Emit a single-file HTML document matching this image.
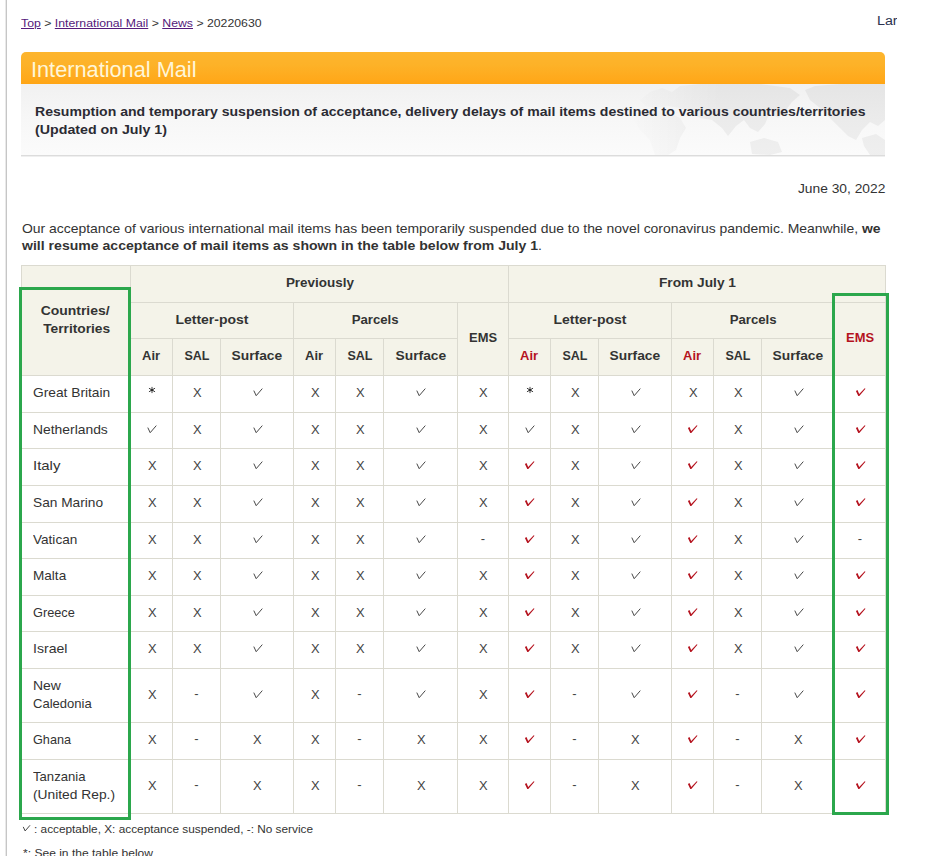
<!DOCTYPE html>
<html><head><meta charset="utf-8"><title>International Mail</title>
<style>
html,body{margin:0;padding:0;background:#fff}
body{width:929px;height:856px;position:relative;overflow:hidden;font-family:"Liberation Sans", sans-serif;}
b{font-weight:700}
</style></head><body>
<div style="position:absolute;left:5px;top:0px;width:1px;height:856px;background:#e9e9e9;"></div>
<div style="position:absolute;left:6px;top:0px;width:1px;height:856px;background:#c6c6c6;"></div>
<div style="position:absolute;left:21px;top:52px;width:864px;height:32px;border-radius:5px 5px 0 0;background:linear-gradient(#fdb52e,#fdb228 40%,#ffa91b 85%,#ffa514);"></div>
<div style="position:absolute;left:21px;top:84px;width:864px;height:71px;background:linear-gradient(#f1f1f1,#f7f7f7 50%,#fbfbfb);"></div>
<svg style="position:absolute;left:21px;top:84px" width="864" height="71" viewBox="21 84 864 71">
<defs><linearGradient id="mg" gradientUnits="userSpaceOnUse" x1="625" y1="0" x2="720" y2="0"><stop offset="0" stop-color="#000" stop-opacity="0"/><stop offset="1" stop-color="#000" stop-opacity="0.05"/></linearGradient></defs>
<g fill="url(#mg)">
<path d="M640 100L650 92L662 88L672 92L680 86L700 84L730 84L760 84L790 88L800 95L792 102L786 110L778 118L770 112L765 124L758 132L750 128L744 120L736 126L728 136L722 128L712 120L700 118L690 112L680 108L668 106L655 108L645 106Z"/>
<path d="M638 111L655 110L668 112L680 118L686 128L680 138L676 150L668 155L655 155L650 140L640 130L634 120Z"/>
<path d="M750 142L764 138L778 142L782 152L770 155L752 154Z"/>
<path d="M805 90L815 86L840 84L885 84L885 120L878 126L870 122L862 130L856 140L848 136L840 128L830 118L820 108L810 100Z"/>
<path d="M862 138L876 134L885 140L885 155L870 155L864 146Z"/>
</g></svg>
<div style="position:absolute;left:21px;top:155px;width:864px;height:1px;background:#dcdcdc;"></div>
<div style="position:absolute;left:21px;top:156px;width:864px;height:1px;background:#efefef;"></div>
<div style="position:absolute;left:870px;top:10px;width:26.5px;height:24px;overflow:hidden"><span style="position:absolute;left:6.5px;top:2.7px;font-size:12.3px;line-height:16px;color:#2b3350;white-space:pre;transform:scaleX(1.16);transform-origin:0 0">Large</span></div>
<div style="position:absolute;left:21px;top:265px;width:865px;height:111px;background:#f4f3e9;"></div>
<div style="position:absolute;left:21px;top:265px;width:865px;height:1px;background:#dbdad0;"></div>
<div style="position:absolute;left:21px;top:813px;width:865px;height:1px;background:#dbdad0;"></div>
<div style="position:absolute;left:21px;top:265px;width:1px;height:549px;background:#dbdad0;"></div>
<div style="position:absolute;left:885px;top:265px;width:1px;height:549px;background:#dbdad0;"></div>
<div style="position:absolute;left:130px;top:302px;width:755px;height:1px;background:#dbdad0;"></div>
<div style="position:absolute;left:130px;top:338px;width:327px;height:1px;background:#dbdad0;"></div>
<div style="position:absolute;left:508px;top:338px;width:326px;height:1px;background:#dbdad0;"></div>
<div style="position:absolute;left:21px;top:375px;width:864px;height:1px;background:#dbdad0;"></div>
<div style="position:absolute;left:21px;top:412px;width:864px;height:1px;background:#dbdad0;"></div>
<div style="position:absolute;left:21px;top:448px;width:864px;height:1px;background:#dbdad0;"></div>
<div style="position:absolute;left:21px;top:485px;width:864px;height:1px;background:#dbdad0;"></div>
<div style="position:absolute;left:21px;top:522px;width:864px;height:1px;background:#dbdad0;"></div>
<div style="position:absolute;left:21px;top:558px;width:864px;height:1px;background:#dbdad0;"></div>
<div style="position:absolute;left:21px;top:595px;width:864px;height:1px;background:#dbdad0;"></div>
<div style="position:absolute;left:21px;top:631px;width:864px;height:1px;background:#dbdad0;"></div>
<div style="position:absolute;left:21px;top:668px;width:864px;height:1px;background:#dbdad0;"></div>
<div style="position:absolute;left:21px;top:722px;width:864px;height:1px;background:#dbdad0;"></div>
<div style="position:absolute;left:21px;top:759px;width:864px;height:1px;background:#dbdad0;"></div>
<div style="position:absolute;left:130px;top:265px;width:1px;height:548px;background:#dbdad0;"></div>
<div style="position:absolute;left:508px;top:265px;width:1px;height:548px;background:#dbdad0;"></div>
<div style="position:absolute;left:293px;top:302px;width:1px;height:511px;background:#dbdad0;"></div>
<div style="position:absolute;left:457px;top:302px;width:1px;height:511px;background:#dbdad0;"></div>
<div style="position:absolute;left:671px;top:302px;width:1px;height:511px;background:#dbdad0;"></div>
<div style="position:absolute;left:834px;top:302px;width:1px;height:511px;background:#dbdad0;"></div>
<div style="position:absolute;left:172px;top:338px;width:1px;height:475px;background:#dbdad0;"></div>
<div style="position:absolute;left:220px;top:338px;width:1px;height:475px;background:#dbdad0;"></div>
<div style="position:absolute;left:335px;top:338px;width:1px;height:475px;background:#dbdad0;"></div>
<div style="position:absolute;left:383px;top:338px;width:1px;height:475px;background:#dbdad0;"></div>
<div style="position:absolute;left:550px;top:338px;width:1px;height:475px;background:#dbdad0;"></div>
<div style="position:absolute;left:598px;top:338px;width:1px;height:475px;background:#dbdad0;"></div>
<div style="position:absolute;left:713px;top:338px;width:1px;height:475px;background:#dbdad0;"></div>
<div style="position:absolute;left:761px;top:338px;width:1px;height:475px;background:#dbdad0;"></div>
<svg style="position:absolute;left:146.50px;top:384.80px" width="10" height="10" viewBox="-5 -5 10 10"><g stroke="#333" stroke-width="0.95" stroke-linecap="round"><path d="M0 -2.7V2.7M-2.7 -1.6L2.7 1.6M-2.7 1.6L2.7 -1.6"/></g><ellipse cx="0" cy="0" rx="1.5" ry="0.85" fill="#222"/></svg>
<svg style="position:absolute;left:250.50px;top:386.80px" width="14.0" height="12.0" viewBox="0 0 14 12"><path d="M2.8 3.6 L5.2 8.7 L11.3 1.6" fill="none" stroke="#484848" stroke-width="1.00" stroke-linejoin="miter"/></svg>
<svg style="position:absolute;left:414.00px;top:386.80px" width="14.0" height="12.0" viewBox="0 0 14 12"><path d="M2.8 3.6 L5.2 8.7 L11.3 1.6" fill="none" stroke="#484848" stroke-width="1.00" stroke-linejoin="miter"/></svg>
<svg style="position:absolute;left:524.50px;top:384.80px" width="10" height="10" viewBox="-5 -5 10 10"><g stroke="#333" stroke-width="0.95" stroke-linecap="round"><path d="M0 -2.7V2.7M-2.7 -1.6L2.7 1.6M-2.7 1.6L2.7 -1.6"/></g><ellipse cx="0" cy="0" rx="1.5" ry="0.85" fill="#222"/></svg>
<svg style="position:absolute;left:628.50px;top:386.80px" width="14.0" height="12.0" viewBox="0 0 14 12"><path d="M2.8 3.6 L5.2 8.7 L11.3 1.6" fill="none" stroke="#484848" stroke-width="1.00" stroke-linejoin="miter"/></svg>
<svg style="position:absolute;left:791.50px;top:386.80px" width="14.0" height="12.0" viewBox="0 0 14 12"><path d="M2.8 3.6 L5.2 8.7 L11.3 1.6" fill="none" stroke="#484848" stroke-width="1.00" stroke-linejoin="miter"/></svg>
<svg style="position:absolute;left:853.50px;top:386.80px" width="14" height="12" viewBox="0 0 14 12"><path d="M1.9 3.9 L3.5 3.0 L5.2 6.9 L10.7 1.2 L11.5 1.8 L5.3 9.1 L4.3 9.1 Z" fill="#b5121e"/></svg>
<svg style="position:absolute;left:145.00px;top:423.80px" width="14.0" height="12.0" viewBox="0 0 14 12"><path d="M2.8 3.6 L5.2 8.7 L11.3 1.6" fill="none" stroke="#484848" stroke-width="1.00" stroke-linejoin="miter"/></svg>
<svg style="position:absolute;left:250.50px;top:423.80px" width="14.0" height="12.0" viewBox="0 0 14 12"><path d="M2.8 3.6 L5.2 8.7 L11.3 1.6" fill="none" stroke="#484848" stroke-width="1.00" stroke-linejoin="miter"/></svg>
<svg style="position:absolute;left:414.00px;top:423.80px" width="14.0" height="12.0" viewBox="0 0 14 12"><path d="M2.8 3.6 L5.2 8.7 L11.3 1.6" fill="none" stroke="#484848" stroke-width="1.00" stroke-linejoin="miter"/></svg>
<svg style="position:absolute;left:523.00px;top:423.80px" width="14.0" height="12.0" viewBox="0 0 14 12"><path d="M2.8 3.6 L5.2 8.7 L11.3 1.6" fill="none" stroke="#484848" stroke-width="1.00" stroke-linejoin="miter"/></svg>
<svg style="position:absolute;left:628.50px;top:423.80px" width="14.0" height="12.0" viewBox="0 0 14 12"><path d="M2.8 3.6 L5.2 8.7 L11.3 1.6" fill="none" stroke="#484848" stroke-width="1.00" stroke-linejoin="miter"/></svg>
<svg style="position:absolute;left:686.00px;top:423.80px" width="14" height="12" viewBox="0 0 14 12"><path d="M1.9 3.9 L3.5 3.0 L5.2 6.9 L10.7 1.2 L11.5 1.8 L5.3 9.1 L4.3 9.1 Z" fill="#b5121e"/></svg>
<svg style="position:absolute;left:791.50px;top:423.80px" width="14.0" height="12.0" viewBox="0 0 14 12"><path d="M2.8 3.6 L5.2 8.7 L11.3 1.6" fill="none" stroke="#484848" stroke-width="1.00" stroke-linejoin="miter"/></svg>
<svg style="position:absolute;left:853.50px;top:423.80px" width="14" height="12" viewBox="0 0 14 12"><path d="M1.9 3.9 L3.5 3.0 L5.2 6.9 L10.7 1.2 L11.5 1.8 L5.3 9.1 L4.3 9.1 Z" fill="#b5121e"/></svg>
<svg style="position:absolute;left:250.50px;top:459.80px" width="14.0" height="12.0" viewBox="0 0 14 12"><path d="M2.8 3.6 L5.2 8.7 L11.3 1.6" fill="none" stroke="#484848" stroke-width="1.00" stroke-linejoin="miter"/></svg>
<svg style="position:absolute;left:414.00px;top:459.80px" width="14.0" height="12.0" viewBox="0 0 14 12"><path d="M2.8 3.6 L5.2 8.7 L11.3 1.6" fill="none" stroke="#484848" stroke-width="1.00" stroke-linejoin="miter"/></svg>
<svg style="position:absolute;left:523.00px;top:459.80px" width="14" height="12" viewBox="0 0 14 12"><path d="M1.9 3.9 L3.5 3.0 L5.2 6.9 L10.7 1.2 L11.5 1.8 L5.3 9.1 L4.3 9.1 Z" fill="#b5121e"/></svg>
<svg style="position:absolute;left:628.50px;top:459.80px" width="14.0" height="12.0" viewBox="0 0 14 12"><path d="M2.8 3.6 L5.2 8.7 L11.3 1.6" fill="none" stroke="#484848" stroke-width="1.00" stroke-linejoin="miter"/></svg>
<svg style="position:absolute;left:686.00px;top:459.80px" width="14" height="12" viewBox="0 0 14 12"><path d="M1.9 3.9 L3.5 3.0 L5.2 6.9 L10.7 1.2 L11.5 1.8 L5.3 9.1 L4.3 9.1 Z" fill="#b5121e"/></svg>
<svg style="position:absolute;left:791.50px;top:459.80px" width="14.0" height="12.0" viewBox="0 0 14 12"><path d="M2.8 3.6 L5.2 8.7 L11.3 1.6" fill="none" stroke="#484848" stroke-width="1.00" stroke-linejoin="miter"/></svg>
<svg style="position:absolute;left:853.50px;top:459.80px" width="14" height="12" viewBox="0 0 14 12"><path d="M1.9 3.9 L3.5 3.0 L5.2 6.9 L10.7 1.2 L11.5 1.8 L5.3 9.1 L4.3 9.1 Z" fill="#b5121e"/></svg>
<svg style="position:absolute;left:250.50px;top:496.80px" width="14.0" height="12.0" viewBox="0 0 14 12"><path d="M2.8 3.6 L5.2 8.7 L11.3 1.6" fill="none" stroke="#484848" stroke-width="1.00" stroke-linejoin="miter"/></svg>
<svg style="position:absolute;left:414.00px;top:496.80px" width="14.0" height="12.0" viewBox="0 0 14 12"><path d="M2.8 3.6 L5.2 8.7 L11.3 1.6" fill="none" stroke="#484848" stroke-width="1.00" stroke-linejoin="miter"/></svg>
<svg style="position:absolute;left:523.00px;top:496.80px" width="14" height="12" viewBox="0 0 14 12"><path d="M1.9 3.9 L3.5 3.0 L5.2 6.9 L10.7 1.2 L11.5 1.8 L5.3 9.1 L4.3 9.1 Z" fill="#b5121e"/></svg>
<svg style="position:absolute;left:628.50px;top:496.80px" width="14.0" height="12.0" viewBox="0 0 14 12"><path d="M2.8 3.6 L5.2 8.7 L11.3 1.6" fill="none" stroke="#484848" stroke-width="1.00" stroke-linejoin="miter"/></svg>
<svg style="position:absolute;left:686.00px;top:496.80px" width="14" height="12" viewBox="0 0 14 12"><path d="M1.9 3.9 L3.5 3.0 L5.2 6.9 L10.7 1.2 L11.5 1.8 L5.3 9.1 L4.3 9.1 Z" fill="#b5121e"/></svg>
<svg style="position:absolute;left:791.50px;top:496.80px" width="14.0" height="12.0" viewBox="0 0 14 12"><path d="M2.8 3.6 L5.2 8.7 L11.3 1.6" fill="none" stroke="#484848" stroke-width="1.00" stroke-linejoin="miter"/></svg>
<svg style="position:absolute;left:853.50px;top:496.80px" width="14" height="12" viewBox="0 0 14 12"><path d="M1.9 3.9 L3.5 3.0 L5.2 6.9 L10.7 1.2 L11.5 1.8 L5.3 9.1 L4.3 9.1 Z" fill="#b5121e"/></svg>
<svg style="position:absolute;left:250.50px;top:533.80px" width="14.0" height="12.0" viewBox="0 0 14 12"><path d="M2.8 3.6 L5.2 8.7 L11.3 1.6" fill="none" stroke="#484848" stroke-width="1.00" stroke-linejoin="miter"/></svg>
<svg style="position:absolute;left:414.00px;top:533.80px" width="14.0" height="12.0" viewBox="0 0 14 12"><path d="M2.8 3.6 L5.2 8.7 L11.3 1.6" fill="none" stroke="#484848" stroke-width="1.00" stroke-linejoin="miter"/></svg>
<svg style="position:absolute;left:523.00px;top:533.80px" width="14" height="12" viewBox="0 0 14 12"><path d="M1.9 3.9 L3.5 3.0 L5.2 6.9 L10.7 1.2 L11.5 1.8 L5.3 9.1 L4.3 9.1 Z" fill="#b5121e"/></svg>
<svg style="position:absolute;left:628.50px;top:533.80px" width="14.0" height="12.0" viewBox="0 0 14 12"><path d="M2.8 3.6 L5.2 8.7 L11.3 1.6" fill="none" stroke="#484848" stroke-width="1.00" stroke-linejoin="miter"/></svg>
<svg style="position:absolute;left:686.00px;top:533.80px" width="14" height="12" viewBox="0 0 14 12"><path d="M1.9 3.9 L3.5 3.0 L5.2 6.9 L10.7 1.2 L11.5 1.8 L5.3 9.1 L4.3 9.1 Z" fill="#b5121e"/></svg>
<svg style="position:absolute;left:791.50px;top:533.80px" width="14.0" height="12.0" viewBox="0 0 14 12"><path d="M2.8 3.6 L5.2 8.7 L11.3 1.6" fill="none" stroke="#484848" stroke-width="1.00" stroke-linejoin="miter"/></svg>
<svg style="position:absolute;left:250.50px;top:569.80px" width="14.0" height="12.0" viewBox="0 0 14 12"><path d="M2.8 3.6 L5.2 8.7 L11.3 1.6" fill="none" stroke="#484848" stroke-width="1.00" stroke-linejoin="miter"/></svg>
<svg style="position:absolute;left:414.00px;top:569.80px" width="14.0" height="12.0" viewBox="0 0 14 12"><path d="M2.8 3.6 L5.2 8.7 L11.3 1.6" fill="none" stroke="#484848" stroke-width="1.00" stroke-linejoin="miter"/></svg>
<svg style="position:absolute;left:523.00px;top:569.80px" width="14" height="12" viewBox="0 0 14 12"><path d="M1.9 3.9 L3.5 3.0 L5.2 6.9 L10.7 1.2 L11.5 1.8 L5.3 9.1 L4.3 9.1 Z" fill="#b5121e"/></svg>
<svg style="position:absolute;left:628.50px;top:569.80px" width="14.0" height="12.0" viewBox="0 0 14 12"><path d="M2.8 3.6 L5.2 8.7 L11.3 1.6" fill="none" stroke="#484848" stroke-width="1.00" stroke-linejoin="miter"/></svg>
<svg style="position:absolute;left:686.00px;top:569.80px" width="14" height="12" viewBox="0 0 14 12"><path d="M1.9 3.9 L3.5 3.0 L5.2 6.9 L10.7 1.2 L11.5 1.8 L5.3 9.1 L4.3 9.1 Z" fill="#b5121e"/></svg>
<svg style="position:absolute;left:791.50px;top:569.80px" width="14.0" height="12.0" viewBox="0 0 14 12"><path d="M2.8 3.6 L5.2 8.7 L11.3 1.6" fill="none" stroke="#484848" stroke-width="1.00" stroke-linejoin="miter"/></svg>
<svg style="position:absolute;left:853.50px;top:569.80px" width="14" height="12" viewBox="0 0 14 12"><path d="M1.9 3.9 L3.5 3.0 L5.2 6.9 L10.7 1.2 L11.5 1.8 L5.3 9.1 L4.3 9.1 Z" fill="#b5121e"/></svg>
<svg style="position:absolute;left:250.50px;top:606.80px" width="14.0" height="12.0" viewBox="0 0 14 12"><path d="M2.8 3.6 L5.2 8.7 L11.3 1.6" fill="none" stroke="#484848" stroke-width="1.00" stroke-linejoin="miter"/></svg>
<svg style="position:absolute;left:414.00px;top:606.80px" width="14.0" height="12.0" viewBox="0 0 14 12"><path d="M2.8 3.6 L5.2 8.7 L11.3 1.6" fill="none" stroke="#484848" stroke-width="1.00" stroke-linejoin="miter"/></svg>
<svg style="position:absolute;left:523.00px;top:606.80px" width="14" height="12" viewBox="0 0 14 12"><path d="M1.9 3.9 L3.5 3.0 L5.2 6.9 L10.7 1.2 L11.5 1.8 L5.3 9.1 L4.3 9.1 Z" fill="#b5121e"/></svg>
<svg style="position:absolute;left:628.50px;top:606.80px" width="14.0" height="12.0" viewBox="0 0 14 12"><path d="M2.8 3.6 L5.2 8.7 L11.3 1.6" fill="none" stroke="#484848" stroke-width="1.00" stroke-linejoin="miter"/></svg>
<svg style="position:absolute;left:686.00px;top:606.80px" width="14" height="12" viewBox="0 0 14 12"><path d="M1.9 3.9 L3.5 3.0 L5.2 6.9 L10.7 1.2 L11.5 1.8 L5.3 9.1 L4.3 9.1 Z" fill="#b5121e"/></svg>
<svg style="position:absolute;left:791.50px;top:606.80px" width="14.0" height="12.0" viewBox="0 0 14 12"><path d="M2.8 3.6 L5.2 8.7 L11.3 1.6" fill="none" stroke="#484848" stroke-width="1.00" stroke-linejoin="miter"/></svg>
<svg style="position:absolute;left:853.50px;top:606.80px" width="14" height="12" viewBox="0 0 14 12"><path d="M1.9 3.9 L3.5 3.0 L5.2 6.9 L10.7 1.2 L11.5 1.8 L5.3 9.1 L4.3 9.1 Z" fill="#b5121e"/></svg>
<svg style="position:absolute;left:250.50px;top:642.80px" width="14.0" height="12.0" viewBox="0 0 14 12"><path d="M2.8 3.6 L5.2 8.7 L11.3 1.6" fill="none" stroke="#484848" stroke-width="1.00" stroke-linejoin="miter"/></svg>
<svg style="position:absolute;left:414.00px;top:642.80px" width="14.0" height="12.0" viewBox="0 0 14 12"><path d="M2.8 3.6 L5.2 8.7 L11.3 1.6" fill="none" stroke="#484848" stroke-width="1.00" stroke-linejoin="miter"/></svg>
<svg style="position:absolute;left:523.00px;top:642.80px" width="14" height="12" viewBox="0 0 14 12"><path d="M1.9 3.9 L3.5 3.0 L5.2 6.9 L10.7 1.2 L11.5 1.8 L5.3 9.1 L4.3 9.1 Z" fill="#b5121e"/></svg>
<svg style="position:absolute;left:628.50px;top:642.80px" width="14.0" height="12.0" viewBox="0 0 14 12"><path d="M2.8 3.6 L5.2 8.7 L11.3 1.6" fill="none" stroke="#484848" stroke-width="1.00" stroke-linejoin="miter"/></svg>
<svg style="position:absolute;left:686.00px;top:642.80px" width="14" height="12" viewBox="0 0 14 12"><path d="M1.9 3.9 L3.5 3.0 L5.2 6.9 L10.7 1.2 L11.5 1.8 L5.3 9.1 L4.3 9.1 Z" fill="#b5121e"/></svg>
<svg style="position:absolute;left:791.50px;top:642.80px" width="14.0" height="12.0" viewBox="0 0 14 12"><path d="M2.8 3.6 L5.2 8.7 L11.3 1.6" fill="none" stroke="#484848" stroke-width="1.00" stroke-linejoin="miter"/></svg>
<svg style="position:absolute;left:853.50px;top:642.80px" width="14" height="12" viewBox="0 0 14 12"><path d="M1.9 3.9 L3.5 3.0 L5.2 6.9 L10.7 1.2 L11.5 1.8 L5.3 9.1 L4.3 9.1 Z" fill="#b5121e"/></svg>
<svg style="position:absolute;left:250.50px;top:688.80px" width="14.0" height="12.0" viewBox="0 0 14 12"><path d="M2.8 3.6 L5.2 8.7 L11.3 1.6" fill="none" stroke="#484848" stroke-width="1.00" stroke-linejoin="miter"/></svg>
<svg style="position:absolute;left:414.00px;top:688.80px" width="14.0" height="12.0" viewBox="0 0 14 12"><path d="M2.8 3.6 L5.2 8.7 L11.3 1.6" fill="none" stroke="#484848" stroke-width="1.00" stroke-linejoin="miter"/></svg>
<svg style="position:absolute;left:523.00px;top:688.80px" width="14" height="12" viewBox="0 0 14 12"><path d="M1.9 3.9 L3.5 3.0 L5.2 6.9 L10.7 1.2 L11.5 1.8 L5.3 9.1 L4.3 9.1 Z" fill="#b5121e"/></svg>
<svg style="position:absolute;left:628.50px;top:688.80px" width="14.0" height="12.0" viewBox="0 0 14 12"><path d="M2.8 3.6 L5.2 8.7 L11.3 1.6" fill="none" stroke="#484848" stroke-width="1.00" stroke-linejoin="miter"/></svg>
<svg style="position:absolute;left:686.00px;top:688.80px" width="14" height="12" viewBox="0 0 14 12"><path d="M1.9 3.9 L3.5 3.0 L5.2 6.9 L10.7 1.2 L11.5 1.8 L5.3 9.1 L4.3 9.1 Z" fill="#b5121e"/></svg>
<svg style="position:absolute;left:791.50px;top:688.80px" width="14.0" height="12.0" viewBox="0 0 14 12"><path d="M2.8 3.6 L5.2 8.7 L11.3 1.6" fill="none" stroke="#484848" stroke-width="1.00" stroke-linejoin="miter"/></svg>
<svg style="position:absolute;left:853.50px;top:688.80px" width="14" height="12" viewBox="0 0 14 12"><path d="M1.9 3.9 L3.5 3.0 L5.2 6.9 L10.7 1.2 L11.5 1.8 L5.3 9.1 L4.3 9.1 Z" fill="#b5121e"/></svg>
<svg style="position:absolute;left:523.00px;top:733.80px" width="14" height="12" viewBox="0 0 14 12"><path d="M1.9 3.9 L3.5 3.0 L5.2 6.9 L10.7 1.2 L11.5 1.8 L5.3 9.1 L4.3 9.1 Z" fill="#b5121e"/></svg>
<svg style="position:absolute;left:686.00px;top:733.80px" width="14" height="12" viewBox="0 0 14 12"><path d="M1.9 3.9 L3.5 3.0 L5.2 6.9 L10.7 1.2 L11.5 1.8 L5.3 9.1 L4.3 9.1 Z" fill="#b5121e"/></svg>
<svg style="position:absolute;left:853.50px;top:733.80px" width="14" height="12" viewBox="0 0 14 12"><path d="M1.9 3.9 L3.5 3.0 L5.2 6.9 L10.7 1.2 L11.5 1.8 L5.3 9.1 L4.3 9.1 Z" fill="#b5121e"/></svg>
<svg style="position:absolute;left:523.00px;top:779.80px" width="14" height="12" viewBox="0 0 14 12"><path d="M1.9 3.9 L3.5 3.0 L5.2 6.9 L10.7 1.2 L11.5 1.8 L5.3 9.1 L4.3 9.1 Z" fill="#b5121e"/></svg>
<svg style="position:absolute;left:686.00px;top:779.80px" width="14" height="12" viewBox="0 0 14 12"><path d="M1.9 3.9 L3.5 3.0 L5.2 6.9 L10.7 1.2 L11.5 1.8 L5.3 9.1 L4.3 9.1 Z" fill="#b5121e"/></svg>
<svg style="position:absolute;left:853.50px;top:779.80px" width="14" height="12" viewBox="0 0 14 12"><path d="M1.9 3.9 L3.5 3.0 L5.2 6.9 L10.7 1.2 L11.5 1.8 L5.3 9.1 L4.3 9.1 Z" fill="#b5121e"/></svg>
<svg style="position:absolute;left:20.90px;top:823.80px" width="11.200000000000001" height="9.600000000000001" viewBox="0 0 14 12"><path d="M2.8 3.6 L5.2 8.7 L11.3 1.6" fill="none" stroke="#484848" stroke-width="1.25" stroke-linejoin="miter"/></svg>
<span style="position:absolute;left:21px;transform-origin:0 0;top:15.69px;font-size:11px;line-height:15px;font-weight:400;color:#333;white-space:pre;transform:scaleX(1.1157);"><span style="color:#551a7b;text-decoration:underline">Top</span> &gt; <span style="color:#551a7b;text-decoration:underline">International Mail</span> &gt; <span style="color:#551a7b;text-decoration:underline">News</span> &gt; 20220630</span>
<span style="position:absolute;left:31.2px;transform-origin:0 0;top:53.58px;font-size:22px;line-height:31px;font-weight:400;color:#fff6d8;white-space:pre;transform:scaleX(0.9878);">International Mail</span>
<span style="position:absolute;left:35px;transform-origin:0 0;top:102.50px;font-size:13px;line-height:18px;font-weight:700;color:#2b2b33;white-space:pre;transform:scaleX(1.0814);">Resumption and temporary suspension of acceptance, delivery delays of mail items destined to various countries/territories</span>
<span style="position:absolute;left:35px;transform-origin:0 0;top:120.50px;font-size:13px;line-height:18px;font-weight:700;color:#2b2b33;white-space:pre;transform:scaleX(1.0943);">(Updated on July 1)</span>
<span style="position:absolute;right:43.5px;transform-origin:100% 0;top:179.50px;font-size:13px;line-height:18px;font-weight:400;color:#333;white-space:pre;transform:scaleX(1.0618);">June 30, 2022</span>
<span style="position:absolute;left:21.5px;transform-origin:0 0;top:219.50px;font-size:13px;line-height:18px;font-weight:400;color:#333;white-space:pre;transform:scaleX(1.0713);">Our acceptance of various international mail items has been temporarily suspended due to the novel coronavirus pandemic. Meanwhile, <b>we</b></span>
<span style="position:absolute;left:22.3px;transform-origin:0 0;top:237.20px;font-size:13px;line-height:18px;font-weight:400;color:#333;white-space:pre;transform:scaleX(1.0823);"><b>will resume acceptance of mail items as shown in the table below from July 1</b>.</span>
<span style="position:absolute;left:286.62px;transform-origin:50% 0;top:274.00px;font-size:13px;line-height:18px;font-weight:700;color:#333;white-space:pre;transform:scaleX(1.0340);">Previously</span>
<span style="position:absolute;left:660.52px;transform-origin:50% 0;top:274.00px;font-size:13px;line-height:18px;font-weight:700;color:#333;white-space:pre;transform:scaleX(1.0552);">From July 1</span>
<span style="position:absolute;left:43.15px;transform-origin:50% 0;top:301.80px;font-size:13px;line-height:18px;font-weight:700;color:#333;white-space:pre;transform:scaleX(1.0731);">Countries/</span>
<span style="position:absolute;left:44.83px;transform-origin:50% 0;top:319.70px;font-size:13px;line-height:18px;font-weight:700;color:#333;white-space:pre;transform:scaleX(1.0577);">Territories</span>
<span style="position:absolute;left:178.05px;transform-origin:50% 0;top:311.00px;font-size:13px;line-height:18px;font-weight:700;color:#333;white-space:pre;transform:scaleX(1.0753);">Letter-post</span>
<span style="position:absolute;left:556.05px;transform-origin:50% 0;top:311.00px;font-size:13px;line-height:18px;font-weight:700;color:#333;white-space:pre;transform:scaleX(1.0753);">Letter-post</span>
<span style="position:absolute;left:352.37px;transform-origin:50% 0;top:311.00px;font-size:13px;line-height:18px;font-weight:700;color:#333;white-space:pre;transform:scaleX(1.0159);">Parcels</span>
<span style="position:absolute;left:729.87px;transform-origin:50% 0;top:311.00px;font-size:13px;line-height:18px;font-weight:700;color:#333;white-space:pre;transform:scaleX(1.0159);">Parcels</span>
<span style="position:absolute;left:468.91px;transform-origin:50% 0;top:328.50px;font-size:13px;line-height:18px;font-weight:700;color:#333;white-space:pre;transform:scaleX(0.9939);">EMS</span>
<span style="position:absolute;left:845.91px;transform-origin:50% 0;top:328.50px;font-size:13px;line-height:18px;font-weight:700;color:#b5121e;white-space:pre;transform:scaleX(0.9939);">EMS</span>
<span style="position:absolute;left:142.47px;transform-origin:50% 0;top:346.50px;font-size:13px;line-height:18px;font-weight:700;color:#333;white-space:pre;transform:scaleX(0.9965);">Air</span>
<span style="position:absolute;left:520.47px;transform-origin:50% 0;top:346.50px;font-size:13px;line-height:18px;font-weight:700;color:#b5121e;white-space:pre;transform:scaleX(0.9965);">Air</span>
<span style="position:absolute;left:183.50px;transform-origin:50% 0;top:346.50px;font-size:13px;line-height:18px;font-weight:700;color:#333;white-space:pre;transform:scaleX(0.9615);">SAL</span>
<span style="position:absolute;left:561.50px;transform-origin:50% 0;top:346.50px;font-size:13px;line-height:18px;font-weight:700;color:#333;white-space:pre;transform:scaleX(0.9615);">SAL</span>
<span style="position:absolute;left:233.15px;transform-origin:50% 0;top:346.50px;font-size:13px;line-height:18px;font-weight:700;color:#333;white-space:pre;transform:scaleX(1.0628);">Surface</span>
<span style="position:absolute;left:611.15px;transform-origin:50% 0;top:346.50px;font-size:13px;line-height:18px;font-weight:700;color:#333;white-space:pre;transform:scaleX(1.0628);">Surface</span>
<span style="position:absolute;left:305.47px;transform-origin:50% 0;top:346.50px;font-size:13px;line-height:18px;font-weight:700;color:#333;white-space:pre;transform:scaleX(0.9965);">Air</span>
<span style="position:absolute;left:683.47px;transform-origin:50% 0;top:346.50px;font-size:13px;line-height:18px;font-weight:700;color:#b5121e;white-space:pre;transform:scaleX(0.9965);">Air</span>
<span style="position:absolute;left:346.50px;transform-origin:50% 0;top:346.50px;font-size:13px;line-height:18px;font-weight:700;color:#333;white-space:pre;transform:scaleX(0.9615);">SAL</span>
<span style="position:absolute;left:724.50px;transform-origin:50% 0;top:346.50px;font-size:13px;line-height:18px;font-weight:700;color:#333;white-space:pre;transform:scaleX(0.9615);">SAL</span>
<span style="position:absolute;left:396.65px;transform-origin:50% 0;top:346.50px;font-size:13px;line-height:18px;font-weight:700;color:#333;white-space:pre;transform:scaleX(1.0628);">Surface</span>
<span style="position:absolute;left:774.15px;transform-origin:50% 0;top:346.50px;font-size:13px;line-height:18px;font-weight:700;color:#333;white-space:pre;transform:scaleX(1.0628);">Surface</span>
<span style="position:absolute;left:33px;transform-origin:0 0;top:384.00px;font-size:13px;line-height:18px;font-weight:400;color:#333;white-space:pre;transform:scaleX(1.0580);">Great Britain</span>
<span style="position:absolute;left:192.66px;transform-origin:50% 0;top:384.00px;font-size:13px;line-height:18px;font-weight:400;color:#444;white-space:pre;transform:scaleX(0.9917);">X</span>
<span style="position:absolute;left:310.66px;transform-origin:50% 0;top:384.00px;font-size:13px;line-height:18px;font-weight:400;color:#444;white-space:pre;transform:scaleX(0.9917);">X</span>
<span style="position:absolute;left:355.66px;transform-origin:50% 0;top:384.00px;font-size:13px;line-height:18px;font-weight:400;color:#444;white-space:pre;transform:scaleX(0.9917);">X</span>
<span style="position:absolute;left:479.16px;transform-origin:50% 0;top:384.00px;font-size:13px;line-height:18px;font-weight:400;color:#444;white-space:pre;transform:scaleX(0.9917);">X</span>
<span style="position:absolute;left:570.66px;transform-origin:50% 0;top:384.00px;font-size:13px;line-height:18px;font-weight:400;color:#444;white-space:pre;transform:scaleX(0.9917);">X</span>
<span style="position:absolute;left:688.66px;transform-origin:50% 0;top:384.00px;font-size:13px;line-height:18px;font-weight:400;color:#444;white-space:pre;transform:scaleX(0.9917);">X</span>
<span style="position:absolute;left:733.66px;transform-origin:50% 0;top:384.00px;font-size:13px;line-height:18px;font-weight:400;color:#444;white-space:pre;transform:scaleX(0.9917);">X</span>
<span style="position:absolute;left:33px;transform-origin:0 0;top:421.00px;font-size:13px;line-height:18px;font-weight:400;color:#333;white-space:pre;transform:scaleX(1.0670);">Netherlands</span>
<span style="position:absolute;left:192.66px;transform-origin:50% 0;top:421.00px;font-size:13px;line-height:18px;font-weight:400;color:#444;white-space:pre;transform:scaleX(0.9917);">X</span>
<span style="position:absolute;left:310.66px;transform-origin:50% 0;top:421.00px;font-size:13px;line-height:18px;font-weight:400;color:#444;white-space:pre;transform:scaleX(0.9917);">X</span>
<span style="position:absolute;left:355.66px;transform-origin:50% 0;top:421.00px;font-size:13px;line-height:18px;font-weight:400;color:#444;white-space:pre;transform:scaleX(0.9917);">X</span>
<span style="position:absolute;left:479.16px;transform-origin:50% 0;top:421.00px;font-size:13px;line-height:18px;font-weight:400;color:#444;white-space:pre;transform:scaleX(0.9917);">X</span>
<span style="position:absolute;left:570.66px;transform-origin:50% 0;top:421.00px;font-size:13px;line-height:18px;font-weight:400;color:#444;white-space:pre;transform:scaleX(0.9917);">X</span>
<span style="position:absolute;left:733.66px;transform-origin:50% 0;top:421.00px;font-size:13px;line-height:18px;font-weight:400;color:#444;white-space:pre;transform:scaleX(0.9917);">X</span>
<span style="position:absolute;left:33px;transform-origin:0 0;top:457.00px;font-size:13px;line-height:18px;font-weight:400;color:#333;white-space:pre;transform:scaleX(1.1500);">Italy</span>
<span style="position:absolute;left:147.66px;transform-origin:50% 0;top:457.00px;font-size:13px;line-height:18px;font-weight:400;color:#444;white-space:pre;transform:scaleX(0.9917);">X</span>
<span style="position:absolute;left:192.66px;transform-origin:50% 0;top:457.00px;font-size:13px;line-height:18px;font-weight:400;color:#444;white-space:pre;transform:scaleX(0.9917);">X</span>
<span style="position:absolute;left:310.66px;transform-origin:50% 0;top:457.00px;font-size:13px;line-height:18px;font-weight:400;color:#444;white-space:pre;transform:scaleX(0.9917);">X</span>
<span style="position:absolute;left:355.66px;transform-origin:50% 0;top:457.00px;font-size:13px;line-height:18px;font-weight:400;color:#444;white-space:pre;transform:scaleX(0.9917);">X</span>
<span style="position:absolute;left:479.16px;transform-origin:50% 0;top:457.00px;font-size:13px;line-height:18px;font-weight:400;color:#444;white-space:pre;transform:scaleX(0.9917);">X</span>
<span style="position:absolute;left:570.66px;transform-origin:50% 0;top:457.00px;font-size:13px;line-height:18px;font-weight:400;color:#444;white-space:pre;transform:scaleX(0.9917);">X</span>
<span style="position:absolute;left:733.66px;transform-origin:50% 0;top:457.00px;font-size:13px;line-height:18px;font-weight:400;color:#444;white-space:pre;transform:scaleX(0.9917);">X</span>
<span style="position:absolute;left:33px;transform-origin:0 0;top:494.00px;font-size:13px;line-height:18px;font-weight:400;color:#333;white-space:pre;transform:scaleX(1.0530);">San Marino</span>
<span style="position:absolute;left:147.66px;transform-origin:50% 0;top:494.00px;font-size:13px;line-height:18px;font-weight:400;color:#444;white-space:pre;transform:scaleX(0.9917);">X</span>
<span style="position:absolute;left:192.66px;transform-origin:50% 0;top:494.00px;font-size:13px;line-height:18px;font-weight:400;color:#444;white-space:pre;transform:scaleX(0.9917);">X</span>
<span style="position:absolute;left:310.66px;transform-origin:50% 0;top:494.00px;font-size:13px;line-height:18px;font-weight:400;color:#444;white-space:pre;transform:scaleX(0.9917);">X</span>
<span style="position:absolute;left:355.66px;transform-origin:50% 0;top:494.00px;font-size:13px;line-height:18px;font-weight:400;color:#444;white-space:pre;transform:scaleX(0.9917);">X</span>
<span style="position:absolute;left:479.16px;transform-origin:50% 0;top:494.00px;font-size:13px;line-height:18px;font-weight:400;color:#444;white-space:pre;transform:scaleX(0.9917);">X</span>
<span style="position:absolute;left:570.66px;transform-origin:50% 0;top:494.00px;font-size:13px;line-height:18px;font-weight:400;color:#444;white-space:pre;transform:scaleX(0.9917);">X</span>
<span style="position:absolute;left:733.66px;transform-origin:50% 0;top:494.00px;font-size:13px;line-height:18px;font-weight:400;color:#444;white-space:pre;transform:scaleX(0.9917);">X</span>
<span style="position:absolute;left:33px;transform-origin:0 0;top:531.00px;font-size:13px;line-height:18px;font-weight:400;color:#333;white-space:pre;transform:scaleX(1.0440);">Vatican</span>
<span style="position:absolute;left:147.66px;transform-origin:50% 0;top:531.00px;font-size:13px;line-height:18px;font-weight:400;color:#444;white-space:pre;transform:scaleX(0.9917);">X</span>
<span style="position:absolute;left:192.66px;transform-origin:50% 0;top:531.00px;font-size:13px;line-height:18px;font-weight:400;color:#444;white-space:pre;transform:scaleX(0.9917);">X</span>
<span style="position:absolute;left:310.66px;transform-origin:50% 0;top:531.00px;font-size:13px;line-height:18px;font-weight:400;color:#444;white-space:pre;transform:scaleX(0.9917);">X</span>
<span style="position:absolute;left:355.66px;transform-origin:50% 0;top:531.00px;font-size:13px;line-height:18px;font-weight:400;color:#444;white-space:pre;transform:scaleX(0.9917);">X</span>
<span style="position:absolute;left:480.83px;transform-origin:50% 0;top:530.00px;font-size:13px;line-height:18px;font-weight:400;color:#444;white-space:pre;">-</span>
<span style="position:absolute;left:570.66px;transform-origin:50% 0;top:531.00px;font-size:13px;line-height:18px;font-weight:400;color:#444;white-space:pre;transform:scaleX(0.9917);">X</span>
<span style="position:absolute;left:733.66px;transform-origin:50% 0;top:531.00px;font-size:13px;line-height:18px;font-weight:400;color:#444;white-space:pre;transform:scaleX(0.9917);">X</span>
<span style="position:absolute;left:857.83px;transform-origin:50% 0;top:530.00px;font-size:13px;line-height:18px;font-weight:400;color:#444;white-space:pre;">-</span>
<span style="position:absolute;left:33px;transform-origin:0 0;top:567.00px;font-size:13px;line-height:18px;font-weight:400;color:#333;white-space:pre;transform:scaleX(1.0440);">Malta</span>
<span style="position:absolute;left:147.66px;transform-origin:50% 0;top:567.00px;font-size:13px;line-height:18px;font-weight:400;color:#444;white-space:pre;transform:scaleX(0.9917);">X</span>
<span style="position:absolute;left:192.66px;transform-origin:50% 0;top:567.00px;font-size:13px;line-height:18px;font-weight:400;color:#444;white-space:pre;transform:scaleX(0.9917);">X</span>
<span style="position:absolute;left:310.66px;transform-origin:50% 0;top:567.00px;font-size:13px;line-height:18px;font-weight:400;color:#444;white-space:pre;transform:scaleX(0.9917);">X</span>
<span style="position:absolute;left:355.66px;transform-origin:50% 0;top:567.00px;font-size:13px;line-height:18px;font-weight:400;color:#444;white-space:pre;transform:scaleX(0.9917);">X</span>
<span style="position:absolute;left:479.16px;transform-origin:50% 0;top:567.00px;font-size:13px;line-height:18px;font-weight:400;color:#444;white-space:pre;transform:scaleX(0.9917);">X</span>
<span style="position:absolute;left:570.66px;transform-origin:50% 0;top:567.00px;font-size:13px;line-height:18px;font-weight:400;color:#444;white-space:pre;transform:scaleX(0.9917);">X</span>
<span style="position:absolute;left:733.66px;transform-origin:50% 0;top:567.00px;font-size:13px;line-height:18px;font-weight:400;color:#444;white-space:pre;transform:scaleX(0.9917);">X</span>
<span style="position:absolute;left:33px;transform-origin:0 0;top:604.00px;font-size:13px;line-height:18px;font-weight:400;color:#333;white-space:pre;transform:scaleX(0.9800);">Greece</span>
<span style="position:absolute;left:147.66px;transform-origin:50% 0;top:604.00px;font-size:13px;line-height:18px;font-weight:400;color:#444;white-space:pre;transform:scaleX(0.9917);">X</span>
<span style="position:absolute;left:192.66px;transform-origin:50% 0;top:604.00px;font-size:13px;line-height:18px;font-weight:400;color:#444;white-space:pre;transform:scaleX(0.9917);">X</span>
<span style="position:absolute;left:310.66px;transform-origin:50% 0;top:604.00px;font-size:13px;line-height:18px;font-weight:400;color:#444;white-space:pre;transform:scaleX(0.9917);">X</span>
<span style="position:absolute;left:355.66px;transform-origin:50% 0;top:604.00px;font-size:13px;line-height:18px;font-weight:400;color:#444;white-space:pre;transform:scaleX(0.9917);">X</span>
<span style="position:absolute;left:479.16px;transform-origin:50% 0;top:604.00px;font-size:13px;line-height:18px;font-weight:400;color:#444;white-space:pre;transform:scaleX(0.9917);">X</span>
<span style="position:absolute;left:570.66px;transform-origin:50% 0;top:604.00px;font-size:13px;line-height:18px;font-weight:400;color:#444;white-space:pre;transform:scaleX(0.9917);">X</span>
<span style="position:absolute;left:733.66px;transform-origin:50% 0;top:604.00px;font-size:13px;line-height:18px;font-weight:400;color:#444;white-space:pre;transform:scaleX(0.9917);">X</span>
<span style="position:absolute;left:33px;transform-origin:0 0;top:640.00px;font-size:13px;line-height:18px;font-weight:400;color:#333;white-space:pre;transform:scaleX(1.0830);">Israel</span>
<span style="position:absolute;left:147.66px;transform-origin:50% 0;top:640.00px;font-size:13px;line-height:18px;font-weight:400;color:#444;white-space:pre;transform:scaleX(0.9917);">X</span>
<span style="position:absolute;left:192.66px;transform-origin:50% 0;top:640.00px;font-size:13px;line-height:18px;font-weight:400;color:#444;white-space:pre;transform:scaleX(0.9917);">X</span>
<span style="position:absolute;left:310.66px;transform-origin:50% 0;top:640.00px;font-size:13px;line-height:18px;font-weight:400;color:#444;white-space:pre;transform:scaleX(0.9917);">X</span>
<span style="position:absolute;left:355.66px;transform-origin:50% 0;top:640.00px;font-size:13px;line-height:18px;font-weight:400;color:#444;white-space:pre;transform:scaleX(0.9917);">X</span>
<span style="position:absolute;left:479.16px;transform-origin:50% 0;top:640.00px;font-size:13px;line-height:18px;font-weight:400;color:#444;white-space:pre;transform:scaleX(0.9917);">X</span>
<span style="position:absolute;left:570.66px;transform-origin:50% 0;top:640.00px;font-size:13px;line-height:18px;font-weight:400;color:#444;white-space:pre;transform:scaleX(0.9917);">X</span>
<span style="position:absolute;left:733.66px;transform-origin:50% 0;top:640.00px;font-size:13px;line-height:18px;font-weight:400;color:#444;white-space:pre;transform:scaleX(0.9917);">X</span>
<span style="position:absolute;left:33px;transform-origin:0 0;top:677.00px;font-size:13px;line-height:18px;font-weight:400;color:#333;white-space:pre;transform:scaleX(1.0740);">New</span>
<span style="position:absolute;left:33px;transform-origin:0 0;top:695.00px;font-size:13px;line-height:18px;font-weight:400;color:#333;white-space:pre;transform:scaleX(1.0040);">Caledonia</span>
<span style="position:absolute;left:147.66px;transform-origin:50% 0;top:686.00px;font-size:13px;line-height:18px;font-weight:400;color:#444;white-space:pre;transform:scaleX(0.9917);">X</span>
<span style="position:absolute;left:194.33px;transform-origin:50% 0;top:685.00px;font-size:13px;line-height:18px;font-weight:400;color:#444;white-space:pre;">-</span>
<span style="position:absolute;left:310.66px;transform-origin:50% 0;top:686.00px;font-size:13px;line-height:18px;font-weight:400;color:#444;white-space:pre;transform:scaleX(0.9917);">X</span>
<span style="position:absolute;left:357.33px;transform-origin:50% 0;top:685.00px;font-size:13px;line-height:18px;font-weight:400;color:#444;white-space:pre;">-</span>
<span style="position:absolute;left:479.16px;transform-origin:50% 0;top:686.00px;font-size:13px;line-height:18px;font-weight:400;color:#444;white-space:pre;transform:scaleX(0.9917);">X</span>
<span style="position:absolute;left:572.33px;transform-origin:50% 0;top:685.00px;font-size:13px;line-height:18px;font-weight:400;color:#444;white-space:pre;">-</span>
<span style="position:absolute;left:735.33px;transform-origin:50% 0;top:685.00px;font-size:13px;line-height:18px;font-weight:400;color:#444;white-space:pre;">-</span>
<span style="position:absolute;left:33px;transform-origin:0 0;top:731.00px;font-size:13px;line-height:18px;font-weight:400;color:#333;white-space:pre;transform:scaleX(0.9750);">Ghana</span>
<span style="position:absolute;left:147.66px;transform-origin:50% 0;top:731.00px;font-size:13px;line-height:18px;font-weight:400;color:#444;white-space:pre;transform:scaleX(0.9917);">X</span>
<span style="position:absolute;left:194.33px;transform-origin:50% 0;top:730.00px;font-size:13px;line-height:18px;font-weight:400;color:#444;white-space:pre;">-</span>
<span style="position:absolute;left:253.16px;transform-origin:50% 0;top:731.00px;font-size:13px;line-height:18px;font-weight:400;color:#444;white-space:pre;transform:scaleX(0.9917);">X</span>
<span style="position:absolute;left:310.66px;transform-origin:50% 0;top:731.00px;font-size:13px;line-height:18px;font-weight:400;color:#444;white-space:pre;transform:scaleX(0.9917);">X</span>
<span style="position:absolute;left:357.33px;transform-origin:50% 0;top:730.00px;font-size:13px;line-height:18px;font-weight:400;color:#444;white-space:pre;">-</span>
<span style="position:absolute;left:416.66px;transform-origin:50% 0;top:731.00px;font-size:13px;line-height:18px;font-weight:400;color:#444;white-space:pre;transform:scaleX(0.9917);">X</span>
<span style="position:absolute;left:479.16px;transform-origin:50% 0;top:731.00px;font-size:13px;line-height:18px;font-weight:400;color:#444;white-space:pre;transform:scaleX(0.9917);">X</span>
<span style="position:absolute;left:572.33px;transform-origin:50% 0;top:730.00px;font-size:13px;line-height:18px;font-weight:400;color:#444;white-space:pre;">-</span>
<span style="position:absolute;left:631.16px;transform-origin:50% 0;top:731.00px;font-size:13px;line-height:18px;font-weight:400;color:#444;white-space:pre;transform:scaleX(0.9917);">X</span>
<span style="position:absolute;left:735.33px;transform-origin:50% 0;top:730.00px;font-size:13px;line-height:18px;font-weight:400;color:#444;white-space:pre;">-</span>
<span style="position:absolute;left:794.16px;transform-origin:50% 0;top:731.00px;font-size:13px;line-height:18px;font-weight:400;color:#444;white-space:pre;transform:scaleX(0.9917);">X</span>
<span style="position:absolute;left:33px;transform-origin:0 0;top:768.00px;font-size:13px;line-height:18px;font-weight:400;color:#333;white-space:pre;transform:scaleX(1.0090);">Tanzania</span>
<span style="position:absolute;left:33px;transform-origin:0 0;top:786.00px;font-size:13px;line-height:18px;font-weight:400;color:#333;white-space:pre;transform:scaleX(1.0610);">(United Rep.)</span>
<span style="position:absolute;left:147.66px;transform-origin:50% 0;top:777.00px;font-size:13px;line-height:18px;font-weight:400;color:#444;white-space:pre;transform:scaleX(0.9917);">X</span>
<span style="position:absolute;left:194.33px;transform-origin:50% 0;top:776.00px;font-size:13px;line-height:18px;font-weight:400;color:#444;white-space:pre;">-</span>
<span style="position:absolute;left:253.16px;transform-origin:50% 0;top:777.00px;font-size:13px;line-height:18px;font-weight:400;color:#444;white-space:pre;transform:scaleX(0.9917);">X</span>
<span style="position:absolute;left:310.66px;transform-origin:50% 0;top:777.00px;font-size:13px;line-height:18px;font-weight:400;color:#444;white-space:pre;transform:scaleX(0.9917);">X</span>
<span style="position:absolute;left:357.33px;transform-origin:50% 0;top:776.00px;font-size:13px;line-height:18px;font-weight:400;color:#444;white-space:pre;">-</span>
<span style="position:absolute;left:416.66px;transform-origin:50% 0;top:777.00px;font-size:13px;line-height:18px;font-weight:400;color:#444;white-space:pre;transform:scaleX(0.9917);">X</span>
<span style="position:absolute;left:479.16px;transform-origin:50% 0;top:777.00px;font-size:13px;line-height:18px;font-weight:400;color:#444;white-space:pre;transform:scaleX(0.9917);">X</span>
<span style="position:absolute;left:572.33px;transform-origin:50% 0;top:776.00px;font-size:13px;line-height:18px;font-weight:400;color:#444;white-space:pre;">-</span>
<span style="position:absolute;left:631.16px;transform-origin:50% 0;top:777.00px;font-size:13px;line-height:18px;font-weight:400;color:#444;white-space:pre;transform:scaleX(0.9917);">X</span>
<span style="position:absolute;left:735.33px;transform-origin:50% 0;top:776.00px;font-size:13px;line-height:18px;font-weight:400;color:#444;white-space:pre;">-</span>
<span style="position:absolute;left:794.16px;transform-origin:50% 0;top:777.00px;font-size:13px;line-height:18px;font-weight:400;color:#444;white-space:pre;transform:scaleX(0.9917);">X</span>
<span style="position:absolute;left:33.5px;transform-origin:0 0;top:821.89px;font-size:11px;line-height:15px;font-weight:400;color:#333;white-space:pre;transform:scaleX(1.0736);">: acceptable, X: acceptance suspended, -: No service</span>
<span style="position:absolute;left:22.5px;transform-origin:0 0;top:846.49px;font-size:11px;line-height:15px;font-weight:400;color:#333;white-space:pre;transform:scaleX(1.0957);">*: See in the table below</span>
<div style="position:absolute;left:19px;top:287px;width:106px;height:527px;border:3px solid #2ba74c"></div>
<div style="position:absolute;left:832px;top:293px;width:51px;height:516px;border:3px solid #2ba74c"></div>
</body></html>
